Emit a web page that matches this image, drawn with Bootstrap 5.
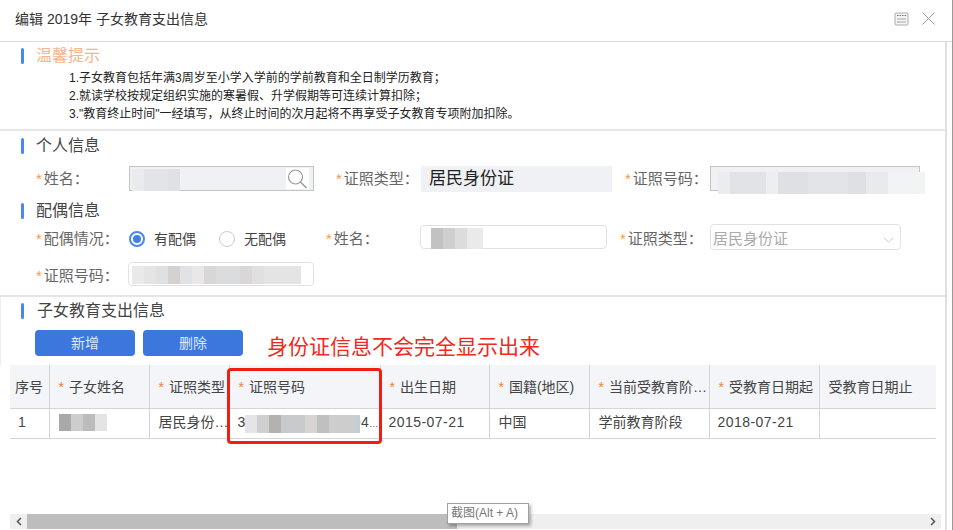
<!DOCTYPE html>
<html lang="zh-CN">
<head>
<meta charset="utf-8">
<title>编辑 2019年 子女教育支出信息</title>
<link rel="stylesheet" href="https://cdn.jsdelivr.net/npm/bootstrap@5.3.0/dist/css/bootstrap.min.css">
<style>
html,body{height:530px;overflow:hidden;background:#fff}
body{font-family:"Liberation Sans","Noto Sans CJK SC",sans-serif;font-size:14px;color:#333;line-height:1.2}
.stage{width:953px;height:530px;border-right:1px solid #999;overflow:hidden}
.dlg-head{height:42px;border-bottom:1px solid #ddd;padding-left:15px;font-size:14px;color:#333}
.dlg-title{margin-top:-2px}
.dlg-tools{margin-right:17px;margin-top:-4px;gap:13px}
.dlg-body{width:947px;height:488px;border-right:2px solid #e0e0e0}
.tips{height:89px;border-bottom:2px solid #e6e6e6;padding-top:5px}
.sec-title{height:18px;padding-left:21px;gap:12px;font-size:16px;color:#444}
.sec-bar{width:3px;height:16px;background:#4a87f0;border-radius:2px}
.warm{font-size:16px;color:#f6b48c}
.tip-text{margin:4px 0 0 69px;font-size:12px;line-height:18px;color:#222}
.person{height:166px;border-bottom:2px solid #e6e6e6;padding-top:6px}
.fld-row{padding-left:36px}
.row-a{height:27px;margin-top:10px;margin-bottom:10px}
.row-a .lbl{padding-top:1px}
.row-b{height:28px;margin-top:3px}
.row-b .lbl{padding-top:4px}
.row-c{height:24px;margin-top:11px}
.row-c .lbl{padding-top:3px}
.lbl{font-size:15px;color:#666;white-space:nowrap;flex:none}
.lbl i{font-style:normal;color:#f59a4a;margin-right:2px}
.w-93{width:93px}.w-85{width:85px}.w-94{width:94px}.w-90{width:90px}
.lbl.m-a{margin-left:22px}.lbl.m-b{margin-left:13px}
.lbl.m-d{margin-left:13px}
.fld{flex:none;position:relative;height:25px;font-size:14px}
.fld-dis{background:#eff1f5;border:1px solid #c4c4c4}
.fld-plain{background:#eff1f5;font-size:17px;color:#222;padding:3px 8px 0;height:26px}
.fld-line{border:1px solid #e2e2e6;border-radius:4px;height:24px}
.fw-184{width:185px}.fw-191{width:191px}.fw-210{width:210px}.fw-186{width:187px}
.fw-c{width:186px;margin-left:-1px}
.fw-sel{width:191px;height:26px;color:#aaa;padding:5px 2px 0;font-size:15px}
.search-box{right:4px;top:1px;width:23px;height:21px;background:#fff}
.radio-o{width:16px;height:16px;border:1px solid #ccc;border-radius:50%;flex:none;background:#fff}
.radio-o.on{border:2px solid #4a87f0;padding:2px}
.radio-o.on span{background:#3f80ee;border-radius:50%}
.radio-t{font-size:14px;color:#444;margin-left:9px;margin-right:23px;white-space:nowrap}
.radios{width:197px;margin-top:4px}
.blur{position:absolute}
.b-name{left:2px;top:2px;width:48px;height:22px;background:linear-gradient(90deg,#e9ebee 0 12px,#e2e4e8 12px 36px,#dfe1e4 36px 48px)}
.b-id{left:7px;top:5px;width:207px;height:22px;background:linear-gradient(90deg,#ebecee 0 12px,#e2e3e6 12px 48px,#eceef0 48px 60px,#dfe0e3 60px 90px,#e3e4e7 90px 130px,#dfe0e3 130px 148px,#e9eaec 148px 170px,#f2f3f4 170px 207px)}
.b-name2{left:10px;top:2px;width:52px;height:21px;background:linear-gradient(90deg,#c2c2c2 0 12px,#cfcfcf 12px 24px,#dcdcdc 24px 36px,#eaeaea 36px 52px)}
.b-id2{left:3px;top:3px;width:169px;height:18px;background:linear-gradient(90deg,#e9e9e9 0 12px,#e4e4e4 12px 24px,#dfe0e3 24px 36px,#d4d2d0 36px 48px,#e0e2e6 48px 60px,#e9e8e6 60px 72px,#d7d7d7 72px 84px,#dadcdd 84px 108px,#dad8d6 108px 120px,#e0e0e0 120px 132px,#e4e4e4 132px 169px)}
.kids{height:68px;border-left:1px solid #eee;padding-top:5px}
.kids .sec-title{padding-left:20px;gap:13px}
.act-row{margin:10px 0 0 34px;gap:8px}
.act-btn{width:100px;height:26px;padding:0;background:#3b77dc;border:0;border-radius:4px;color:#dfe9fa;font-size:14px}
.alert-note{margin:2px 0 0 16px;font-size:21px;color:#f02a20;line-height:30px;white-space:nowrap}
.tbl-wrap{position:relative;margin-left:10px;width:926px;height:149px}
.grid-t{table-layout:fixed;width:926px;margin:0;font-size:14px;--bs-table-bg:transparent}
.grid-t th,.grid-t td{padding:0 0 0 9px;border-right:1px solid #d4d4da;border-bottom:1px solid #d4d4da;white-space:nowrap;overflow:hidden;vertical-align:middle;color:#444;font-weight:400}
.grid-t th{height:43px;background:#f3f5f9;padding-top:2px}
.grid-t td{height:30px;color:#444;padding-bottom:2px}
.grid-t th:last-child,.grid-t td:last-child{border-right:0}
.grid-t th i{font-style:normal;color:#f5822a;margin-right:5px}
.grid-t .c0{padding-left:5px}
.grid-t .date-n{padding-left:8px;letter-spacing:.45px}
.ell-s{font-size:9px;letter-spacing:0}
.b-child{display:block;width:48px;height:17px;background:linear-gradient(90deg,#a9a9a9 0 12px,#cdcdcd 12px 24px,#bcbcbc 24px 36px,#e4e4e4 36px 48px)}
.b-cert{left:15px;top:6px;width:115px;height:18px;background:linear-gradient(90deg,#e5e5e5 0 12px,#cfcfcf 12px 24px,#b4b2b0 24px 36px,#c9cacb 36px 60px,#d6d5d4 60px 72px,#bfc0c0 72px 84px,#cdcdcd 84px 108px,#c6ced3 108px 115px);z-index:1}
.cert-cell{position:relative}
.red-box{position:absolute;left:217px;top:3px;width:155px;height:76px;border:3px solid #f01e14;border-radius:4px;pointer-events:none}
.scroll-line{height:15px;margin:0 0 0 10px;width:931px;background:#efefef}
.sc-arrow{width:17px;flex:none;text-align:center;line-height:0}
.sc-thumb{width:430px;background:#bdbdbd;height:15px}
.shot-tip{position:absolute;left:447px;top:503px;width:82px;height:21px;background:#fff;border:1px solid #a0a0a0;box-shadow:2px 2px 3px rgba(0,0,0,.3);font-size:12px;color:#777;padding:2px 0 0 3px;white-space:nowrap}
</style>
</head>
<body>
<div class="stage position-relative">
  <div class="dlg-head d-flex align-items-center justify-content-between">
    <div class="dlg-title">编辑 2019年 子女教育支出信息</div>
    <div class="dlg-tools d-flex align-items-center">
      <svg width="15" height="14" viewBox="0 0 15 14" aria-hidden="true"><rect x="1" y="1" width="13" height="12" rx="1" fill="#f4f4f4" stroke="#aaa"/><path d="M3 3.5h9" stroke="#777" stroke-dasharray="1.5 1"/><rect x="3" y="6" width="9" height="2" fill="#ccc"/><rect x="3" y="9" width="9" height="2" fill="#ccc"/></svg>
      <svg width="13" height="13" viewBox="0 0 13 13" aria-hidden="true"><path d="M.5.5l12 12M12.500.5l-12 12" stroke="#999" fill="none"/></svg>
    </div>
  </div>
  <div class="dlg-body">
    <div class="tips">
      <div class="sec-title d-flex align-items-center"><span class="sec-bar"></span><span class="warm">温馨提示</span></div>
      <div class="tip-text">
        <div>1.子女教育包括年满3周岁至小学入学前的学前教育和全日制学历教育；</div>
        <div>2.就读学校按规定组织实施的寒暑假、升学假期等可连续计算扣除；</div>
        <div>3."教育终止时间"一经填写，从终止时间的次月起将不再享受子女教育专项附加扣除。</div>
      </div>
    </div>
    <div class="person">
      <div class="sec-title d-flex align-items-center"><span class="sec-bar"></span><span>个人信息</span></div>
      <div class="fld-row row-a d-flex align-items-center">
        <div class="lbl w-93"><i>*</i>姓名：</div>
        <div class="fld fld-dis fw-184"><span class="blur b-name"></span>
          <svg class="position-absolute search-box" viewBox="0 0 23 21" aria-hidden="true"><circle cx="9.500" cy="9" r="7" fill="none" stroke="#999" stroke-width="1.2"/><path d="M14.500 14l6 6" stroke="#999" stroke-width="1.5"/></svg>
        </div>
        <div class="lbl m-a w-85"><i>*</i>证照类型：</div>
        <div class="fld fld-plain fw-191">居民身份证</div>
        <div class="lbl m-b w-85"><i>*</i>证照号码：</div>
        <div class="fld fld-dis fw-210"><span class="blur b-id"></span></div>
      </div>
      <div class="sec-title d-flex align-items-center"><span class="sec-bar"></span><span>配偶信息</span></div>
      <div class="fld-row row-b d-flex align-items-center">
        <div class="lbl w-93"><i>*</i>配偶情况：</div>
        <div class="radios d-flex align-items-center">
          <span class="radio-o on d-flex"><span class="flex-grow-1"></span></span><span class="radio-t">有配偶</span>
          <span class="radio-o"></span><span class="radio-t">无配偶</span>
        </div>
        <div class="lbl w-94"><i>*</i>姓名：</div>
        <div class="fld fld-line fw-186"><span class="blur b-name2"></span></div>
        <div class="lbl m-d w-90"><i>*</i>证照类型：</div>
        <div class="fld fld-line fw-sel d-flex justify-content-between">居民身份证
          <svg class="me-1 mt-1" width="11" height="11" viewBox="0 0 11 11" aria-hidden="true"><path d="M1 4l4.500 4 4.500-4" fill="none" stroke="#ccc"/></svg>
        </div>
      </div>
      <div class="fld-row row-c d-flex align-items-center">
        <div class="lbl w-93"><i>*</i>证照号码：</div>
        <div class="fld fld-line fw-c"><span class="blur b-id2"></span></div>
      </div>
    </div>
    <div class="kids">
      <div class="sec-title d-flex align-items-center"><span class="sec-bar"></span><span>子女教育支出信息</span></div>
      <div class="act-row d-flex align-items-start">
        <button type="button" class="btn act-btn">新增</button>
        <button type="button" class="btn act-btn">删除</button>
        <div class="alert-note">身份证信息不会完全显示出来</div>
      </div>
    </div>
    <div class="tbl-wrap">
      <table class="table grid-t">
        <colgroup><col width="39"><col width="100"><col width="80"><col width="151"><col width="109"><col width="100"><col width="120"><col width="110"><col width="117"></colgroup>
        <thead><tr>
          <th class="c0">序号</th><th><i>*</i>子女姓名</th><th><i>*</i>证照类型</th><th><i>*</i>证照号码</th><th><i>*</i>出生日期</th><th><i>*</i>国籍(地区)</th><th><i>*</i>当前受教育阶…</th><th><i>*</i>受教育日期起</th><th>受教育日期止</th>
        </tr></thead>
        <tbody><tr>
          <td class="c0 ps-2">1</td><td><span class="b-child"></span></td><td>居民身份…</td><td class="cert-cell date-n">3<span class="blur b-cert"></span>000000000000004<span class="ell-s">…</span></td><td class="date-n">2015-07-21</td><td>中国</td><td>学前教育阶段</td><td class="date-n">2018-07-21</td><td></td>
        </tr></tbody>
      </table>
      <div class="red-box"></div>
    </div>
    <div class="scroll-line d-flex align-items-center">
      <span class="sc-arrow"><svg width="6" height="9" viewBox="0 0 6 9" aria-hidden="true"><path d="M5 1L1.500 4.500 5 8" fill="none" stroke="#555" stroke-width="1.5"/></svg></span><span class="sc-thumb"></span><span class="flex-grow-1"></span><span class="sc-arrow"><svg width="6" height="9" viewBox="0 0 6 9" aria-hidden="true"><path d="M1 1l3.500 3.500L1 8" fill="none" stroke="#555" stroke-width="1.5"/></svg></span>
    </div>
  </div>
  <div class="shot-tip">截图(Alt + A)</div>
</div>
<script src="https://cdn.jsdelivr.net/npm/bootstrap@5.3.0/dist/js/bootstrap.bundle.min.js"></script>
</body>
</html>
